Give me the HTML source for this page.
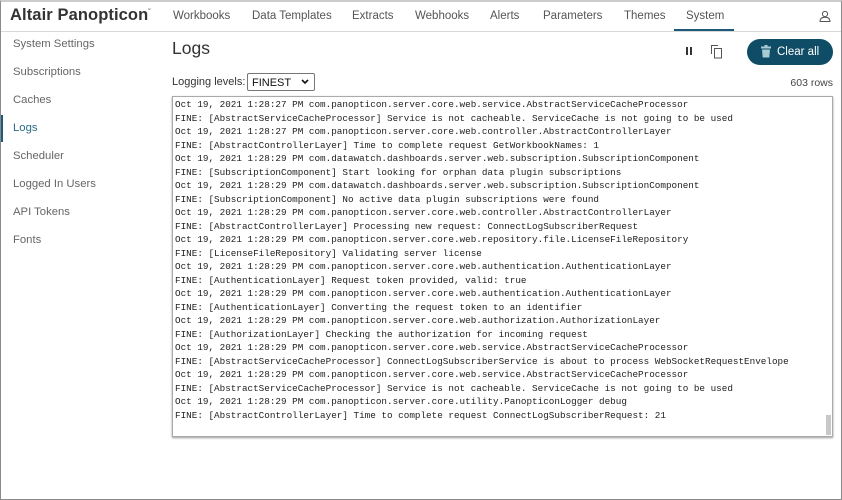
<!DOCTYPE html>
<html><head><meta charset="utf-8"><style>
*{box-sizing:border-box;margin:0;padding:0}
body{width:842px;height:500px;overflow:hidden;background:#fff;font-family:"Liberation Sans",sans-serif;position:relative}
.frame{position:absolute;left:0;top:0;width:842px;height:500px;border:1px solid #8a8a8a;border-top:2px solid #ccc}
.hdr{position:absolute;left:0;top:0;width:842px;height:32px;border-bottom:1px solid #d8d8d8}
.logo{position:absolute;left:10px;top:6px;font-size:16.5px;font-weight:bold;color:#333;letter-spacing:0.1px}
.tab{position:absolute;top:10px;font-size:11.5px;color:#555}
.sys{border-bottom:2px solid #1b5a78;height:21px;}
.nav{position:absolute;left:13px;font-size:11.3px;color:#666}
.code{position:absolute;left:172px;top:96px;width:661px;height:341px;border:1px solid #aaa;box-shadow:0 1px 2px #999;font-family:"Liberation Mono",monospace;font-size:9.3px;line-height:13.52px;color:#222;padding:1px 0 0 2px;white-space:pre;overflow:hidden}
.sb{position:absolute;right:1px;top:318px;width:5px;height:20px;background:#c8c8c8}
</style></head><body>
<div class="hdr">
<div class="logo">Altair Panopticon<sup style="font-size:6px">˜</sup></div>
<div class="tab" style="left:173px">Workbooks</div>
<div class="tab" style="left:252px">Data Templates</div>
<div class="tab" style="left:352px">Extracts</div>
<div class="tab" style="left:415px">Webhooks</div>
<div class="tab" style="left:490px">Alerts</div>
<div class="tab" style="left:543px">Parameters</div>
<div class="tab" style="left:624px">Themes</div>
<div class="tab sys" style="left:674px;width:60px;padding-left:12px">System</div>
<svg style="position:absolute;left:819px;top:10px" width="12" height="12" viewBox="0 0 12 12"><circle cx="6" cy="4" r="2.6" fill="none" stroke="#555" stroke-width="1"/><path d="M1 11.5c0-3 2.2-4.3 5-4.3s5 1.3 5 4.3z" fill="none" stroke="#555" stroke-width="1"/></svg>
</div>
<div style="position:absolute;left:0;top:115px;width:3px;height:27px;background:#1b5a78"></div>
<div class="nav" style="top:38px">System Settings</div>
<div class="nav" style="top:66px">Subscriptions</div>
<div class="nav" style="top:94px">Caches</div>
<div class="nav" style="top:122px;color:#2a6a88">Logs</div>
<div class="nav" style="top:150px">Scheduler</div>
<div class="nav" style="top:178px">Logged In Users</div>
<div class="nav" style="top:206px">API Tokens</div>
<div class="nav" style="top:234px">Fonts</div>
<div style="position:absolute;left:172px;top:38px;font-size:17.5px;color:#333">Logs</div>
<div style="position:absolute;left:172px;top:76px;font-size:11px;color:#333">Logging levels:</div>
<div style="position:absolute;left:247px;top:73px;width:68px;height:18px;border:1px solid #777;border-radius:2px;font-size:11px;padding:3px 0 0 4px;color:#111">FINEST<svg style="position:absolute;right:5px;top:5px" width="8" height="6" viewBox="0 0 8 6"><path d="M1 1l3 3 3-3" fill="none" stroke="#111" stroke-width="1.6"/></svg></div>
<div style="position:absolute;left:686px;top:47px;width:2px;height:8px;background:#333"></div>
<div style="position:absolute;left:690px;top:47px;width:2px;height:8px;background:#333"></div>
<svg style="position:absolute;left:710px;top:44px" width="14" height="15" viewBox="0 0 14 15"><path d="M1.5 10V1.5H8" fill="none" stroke="#555" stroke-width="1"/><rect x="4.5" y="4.5" width="7" height="9.5" fill="none" stroke="#555" stroke-width="1"/></svg>
<div style="position:absolute;left:747px;top:39px;width:86px;height:26px;border-radius:13px;background:#0f4c66;color:#fff;font-size:11.5px;padding:7px 0 0 30px">Clear all</div>
<svg style="position:absolute;left:761px;top:45px" width="10" height="13" viewBox="0 0 10 13"><rect x="0" y="1.5" width="10" height="2" fill="#a8cbd4"/><rect x="3.5" y="0" width="3" height="2" fill="#a8cbd4"/><path d="M1 4.5h8l-.7 8H1.7z" fill="#a8cbd4"/></svg>
<div style="position:absolute;right:9px;top:77px;font-size:10.5px;color:#444">603 rows</div>
<div class="code">Oct 19, 2021 1:28:27 PM com.panopticon.server.core.web.service.AbstractServiceCacheProcessor
FINE: [AbstractServiceCacheProcessor] Service is not cacheable. ServiceCache is not going to be used
Oct 19, 2021 1:28:27 PM com.panopticon.server.core.web.controller.AbstractControllerLayer
FINE: [AbstractControllerLayer] Time to complete request GetWorkbookNames: 1
Oct 19, 2021 1:28:29 PM com.datawatch.dashboards.server.web.subscription.SubscriptionComponent
FINE: [SubscriptionComponent] Start looking for orphan data plugin subscriptions
Oct 19, 2021 1:28:29 PM com.datawatch.dashboards.server.web.subscription.SubscriptionComponent
FINE: [SubscriptionComponent] No active data plugin subscriptions were found
Oct 19, 2021 1:28:29 PM com.panopticon.server.core.web.controller.AbstractControllerLayer
FINE: [AbstractControllerLayer] Processing new request: ConnectLogSubscriberRequest
Oct 19, 2021 1:28:29 PM com.panopticon.server.core.web.repository.file.LicenseFileRepository
FINE: [LicenseFileRepository] Validating server license
Oct 19, 2021 1:28:29 PM com.panopticon.server.core.web.authentication.AuthenticationLayer
FINE: [AuthenticationLayer] Request token provided, valid: true
Oct 19, 2021 1:28:29 PM com.panopticon.server.core.web.authentication.AuthenticationLayer
FINE: [AuthenticationLayer] Converting the request token to an identifier
Oct 19, 2021 1:28:29 PM com.panopticon.server.core.web.authorization.AuthorizationLayer
FINE: [AuthorizationLayer] Checking the authorization for incoming request
Oct 19, 2021 1:28:29 PM com.panopticon.server.core.web.service.AbstractServiceCacheProcessor
FINE: [AbstractServiceCacheProcessor] ConnectLogSubscriberService is about to process WebSocketRequestEnvelope
Oct 19, 2021 1:28:29 PM com.panopticon.server.core.web.service.AbstractServiceCacheProcessor
FINE: [AbstractServiceCacheProcessor] Service is not cacheable. ServiceCache is not going to be used
Oct 19, 2021 1:28:29 PM com.panopticon.server.core.utility.PanopticonLogger debug
FINE: [AbstractControllerLayer] Time to complete request ConnectLogSubscriberRequest: 21<div class="sb"></div></div>
<div class="frame"></div>
</body></html>
